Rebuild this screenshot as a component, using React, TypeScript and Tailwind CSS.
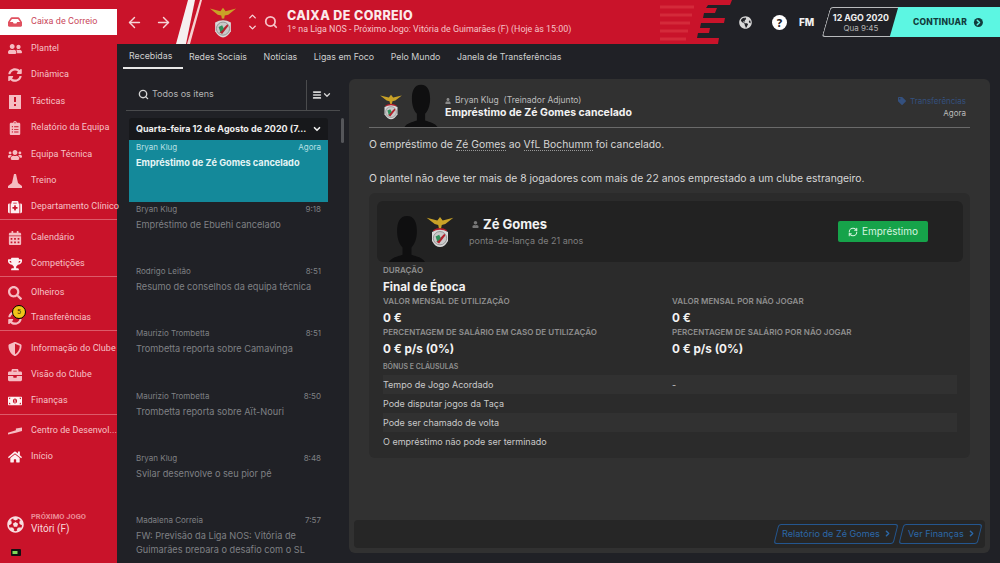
import { ChevronDown, ChevronUp, ChevronRight, ArrowLeft, ArrowRight, Search, RefreshCw, Menu } from 'lucide-react';
import {
  FaBriefcase,
  FaCalendarAlt,
  FaClipboardList,
  FaFutbol,
  FaGlobeAmericas,
  FaHome,
  FaInbox,
  FaMedkit,
  FaMoneyBillAlt,
  FaSearch,
  FaShieldAlt,
  FaSyncAlt,
  FaTrophy,
  FaUserFriends,
  FaUsers,
  FaTag,
  FaUser,
} from 'react-icons/fa';

// Icons the packages don't have in this shape
const TacticsIcon = ({ className }: { className: string }) => (
  <svg viewBox="0 0 14 14" className={className}>
    <path fillRule="evenodd" fill="currentColor" d="M1 0 H13 V14 H1 Z M6 2 V7 H8 V2 Z M6 9 V11 H8 V9 Z" />
  </svg>
);

const TrainingIcon = ({ className }: { className: string }) => (
  <svg viewBox="0 0 14 14" className={className}>
    <path fill="currentColor" d="M6 0 H8 L10 9 L14 12 V14 H0 V12 L4 9 Z" />
  </svg>
);

const DevelopmentIcon = ({ className }: { className: string }) => (
  <svg viewBox="0 0 16 14" className={className}>
    <path fill="currentColor" d="M0 9 L9 6 L9 4 L16 3 V7 L9 9 L0 11 Z" />
  </svg>
);

const navItems = [
  { name: 'Caixa de Correio', icon: FaInbox, h: 'h-[26px]', active: true },
  { name: 'Plantel', icon: FaUserFriends, h: 'h-[27px]' },
  { name: 'Dinâmica', icon: FaSyncAlt, h: 'h-[26px]' },
  { name: 'Tácticas', icon: TacticsIcon, h: 'h-[27px]' },
  { name: 'Relatório da Equipa', icon: FaClipboardList, h: 'h-[26px]' },
  { name: 'Equipa Técnica', icon: FaUsers, h: 'h-[27px]' },
  { name: 'Treino', icon: TrainingIcon, h: 'h-[26px]' },
  { name: 'Departamento Clínico', icon: FaMedkit, h: 'h-[26px]', line: 'mb-[4px]', bright: true },
  { name: 'Calendário', icon: FaCalendarAlt, h: 'h-[27px]' },
  { name: 'Competições', icon: FaTrophy, h: 'h-[26px]', line: 'mb-[3px]', bright: true },
  { name: 'Olheiros', icon: FaSearch, h: 'h-[25px]' },
  { name: 'Transferências', icon: FaSyncAlt, h: 'h-[26px]', line: 'mb-[4px]', badge: '5' },
  { name: 'Informação do Clube', icon: FaShieldAlt, h: 'h-[27px]' },
  { name: 'Visão do Clube', icon: FaBriefcase, h: 'h-[26px]' },
  { name: 'Finanças', icon: FaMoneyBillAlt, h: 'h-[27px]', line: 'mb-[3px]', bright: true },
  { name: 'Centro de Desenvol...', icon: DevelopmentIcon, h: 'h-[26px]' },
  { name: 'Início', icon: FaHome, h: 'h-[26px]', bright: true },
];

const tabs = ['Recebidas', 'Redes Sociais', 'Notícias', 'Ligas em Foco', 'Pelo Mundo', 'Janela de Transferências'];

const messages = [
  { from: 'Bryan Klug', time: '9:18', title: 'Empréstimo de Ebuehi cancelado' },
  { from: 'Rodrigo Leitão', time: '8:51', title: 'Resumo de conselhos da equipa técnica' },
  { from: 'Maurizio Trombetta', time: '8:51', title: 'Trombetta reporta sobre Camavinga' },
  { from: 'Maurizio Trombetta', time: '8:50', title: 'Trombetta reporta sobre Aït-Nouri' },
  { from: 'Bryan Klug', time: '8:48', title: 'Svilar desenvolve o seu pior pé' },
  { from: 'Madalena Correia', time: '7:57', title: 'FW: Previsão da Liga NOS: Vitória de Guimarães prepara o desafio com o SL Benfica' },
];

const Crest = ({ className }: { className: string }) => (
  <svg viewBox="0 0 32 36" className={className}>
    <path d="M1 2 L13 5 L16 1 L19 5 L31 2 L22 9 L18 10 L17 15 L15 15 L14 10 L10 9 Z" fill="#c9a227" />
    <path d="M8 16 Q16 11 24 16 L22 18 H10 Z" fill="#b3202c" />
    <path d="M7 18 Q16 13 25 18 L25 28 Q21 35 16 35 Q11 35 7 28 Z" fill="#d9d9d9" />
    <circle cx="16" cy="25" r="7.5" fill="#c9c9c9" stroke="#8c8c8c" />
    <path d="M12 29 L21 20 L22 22 L15 31 Z" fill="#b3202c" />
    <path d="M11 23 L15 21 L17 25 L13 29 Z" fill="#2f8f5b" />
  </svg>
);

const Silhouette = ({ className }: { className: string }) => (
  <svg viewBox="0 0 40 52" className={className}>
    <path d="M20 1 C12 1 9 8 9 18 C9 27 12 33 15 36 L15 44 C9 46 3 47 0 52 H40 C37 47 31 46 25 44 L25 36 C28 33 31 27 31 18 C31 8 28 1 20 1 Z" fill="#0f0f10" />
  </svg>
);

const Field = ({ label, value }: { label: string; value: string }) => (
  <div className="h-[31px]">
    <div className="whitespace-nowrap text-[8px] font-semibold leading-[11px] tracking-[0.05px] text-[#8f8f8f]">{label}</div>
    <div className="mt-[2px] text-[11.7px] font-bold leading-[18px] text-[#f2f2f2]">{value}</div>
  </div>
);

const Sidebar = () => (
  <aside className="flex h-full w-[117px] shrink-0 flex-col bg-[#c9132a] pt-[9px] font-['Roboto',sans-serif]">
    {navItems.map((item) => {
      const Icon = item.icon;
      return (
        <div
          key={item.name}
          className={`relative flex shrink-0 items-center pl-[8px] ${item.h} ${item.active ? 'bg-white' : ''} ${
            item.line ? `border-b border-[#dc5a69] ${item.line}` : ''
          }`}
        >
          <span className="flex w-[23px] shrink-0 items-center">
            <Icon
              className={`h-[14px] w-[14px] ${
                item.active ? 'text-[#e0505f]' : item.bright ? 'text-[#fdf0f1]' : 'text-[#f6bcc2]'
              }`}
            />
          </span>
          <span className={`whitespace-nowrap text-[9px] tracking-[0.05px] ${item.active ? 'text-[#c9475a]' : 'text-[#f6c3c8]'}`}>
            {item.name}
          </span>
          {item.badge && (
            <span className="absolute left-[12px] top-0 flex h-[14px] w-[14px] items-center justify-center rounded-full border border-black bg-[#f0c419] text-[7px] text-[#3a2c00]">
              {item.badge}
            </span>
          )}
        </div>
      );
    })}
    <div className="mt-auto flex items-center pl-[7px]">
      <FaFutbol className="mr-[7px] mt-[2px] h-[17px] w-[17px] text-[#f8dfe1]" />
      <div>
        <div className="whitespace-nowrap text-[7.5px] font-bold leading-[10px] text-[#ec8c97]">PRÓXIMO JOGO</div>
        <div className="text-[10px] leading-[13px] text-[#f8d8db]">Vitóri (F)</div>
      </div>
    </div>
    <div className="mb-[7px] mt-[14px] pl-[11px]">
      <svg viewBox="0 0 10 7" className="h-[7px] w-[10px]">
        <rect width="10" height="7" rx="1" fill="#111" />
        <rect x="1.5" y="2" width="5" height="3" fill="#7ed957" />
      </svg>
    </div>
  </aside>
);

const TopBar = () => (
  <header className="flex h-[44px] shrink-0">
    <div className="flex flex-1 items-center bg-[#c9132a] pl-[9px]">
      <ArrowLeft className="h-[17px] w-[17px] text-[#f6d5d8]" />
      <ArrowRight className="ml-[12px] h-[17px] w-[17px] text-[#f6d5d8]" />
      <svg viewBox="0 0 32 44" className="h-[44px] w-[32px]">
        <path d="M4 44 L16 0 H23 L14 44 Z" fill="#f5f0f0" />
        <path d="M15 44 L28 0 H30 L18 44 Z" fill="#f5d0d0" />
      </svg>
      <Crest className="ml-[5px] h-[33px] w-[28px]" />
      <div className="ml-[10px] flex flex-col text-[#f6d5d8]">
        <ChevronUp className="h-[11px] w-[11px]" strokeWidth={3} />
        <ChevronDown className="h-[11px] w-[11px]" strokeWidth={3} />
      </div>
      <Search className="ml-[6px] h-[14px] w-[14px] text-[#f6c3c8]" strokeWidth={3} />
      <div className="ml-[9px] font-['Inter',sans-serif]">
        <div className="whitespace-nowrap text-[12.5px] font-extrabold leading-[14px] tracking-[0.4px] text-[#fbe9ea]">CAIXA DE CORREIO</div>
        <div className="whitespace-nowrap font-['Roboto',sans-serif] text-[8.9px] leading-[12px] text-[#f6c3c8]">
          1º na Liga NOS - Próximo Jogo: Vitória de Guimarães (F) (Hoje às 15:00)
        </div>
      </div>
    </div>
    <svg viewBox="0 0 72 44" className="h-[44px] w-[72px] shrink-0">
      <path d="M0 0 H72 L70 5 H48 L46 8 H57 L55 13 H44 L43 18 H65 L64 23 H41 L40 28 H50 L49 33 H38 L37 38 H59 L58 44 H0 Z" fill="#c9132a" />
      <path d="M0 7 H34 M0 15 H32 M0 23 H30 M0 31 H28 M0 39 H26" stroke="#d42a3a" strokeWidth="3" />
    </svg>
    <div className="flex w-[268px] shrink-0 items-center bg-[#202126] pl-[7px]">
      <FaGlobeAmericas className="h-[13px] w-[13px] text-[#d8d8d8]" />
      <span className="ml-[20px] flex h-[15px] w-[15px] items-center justify-center rounded-full bg-white text-[11px] font-extrabold leading-none text-[#202126]">?</span>
      <span className="ml-[12px] font-['Inter',sans-serif] text-[10px] font-extrabold text-[#f0f0f0]">FM</span>
      <div className="ml-[12px] flex h-[31px] items-center">
        <div className="flex h-[30px] w-[72px] -skew-x-[16deg] items-center justify-center rounded-l-[3px] border border-r-0 border-[#b9bbbd] bg-[#202126] pr-[3px]">
          <div className="skew-x-[16deg] text-center font-['Inter',sans-serif]">
            <div className="whitespace-nowrap text-[8.8px] font-bold leading-[11px] text-[#f0f0f0]">12 AGO 2020</div>
            <div className="text-[8px] leading-[10px] text-[#b5b5b5]">Qua 9:45</div>
          </div>
        </div>
        <div className="ml-[-4px] mr-[-8px] flex h-[30px] w-[112px] -skew-x-[16deg] items-center justify-center bg-[#5cf6e2]">
          <div className="flex skew-x-[16deg] items-center pr-[4px] font-['Inter',sans-serif] text-[8.5px] font-extrabold tracking-[0.2px] text-[#123c3c]">
            CONTINUAR
            <ChevronRight className="ml-[7px] h-[9px] w-[9px] rounded-full bg-[#123c3c] text-[#5cf6e2]" strokeWidth={4} />
          </div>
        </div>
      </div>
    </div>
  </header>
);

const MessageList = () => (
  <section className="flex h-full w-[232px] shrink-0 flex-col pl-[9px] pt-[9px] font-['Inter',sans-serif]">
    <div className="flex h-[32px] w-[214px] shrink-0 items-center border-b border-[#4a4b4d]">
      <Search className="ml-[12px] h-[11px] w-[11px] text-[#d5d5d5]" strokeWidth={3} />
      <span className="ml-[3px] mb-[2px] text-[9px] text-[#b5b5b5]">Todos os itens</span>
      <div className="ml-auto flex h-[30px] w-[34px] items-center border-l border-[#4a4b4d] pl-[5px]">
        <Menu className="h-[10px] w-[10px] text-[#d5d5d5]" strokeWidth={4} />
        <ChevronDown className="h-[10px] w-[10px] text-[#d5d5d5]" strokeWidth={3} />
      </div>
    </div>
    <div className="relative mt-[7px] min-h-0 flex-1 overflow-hidden pb-[10px]">
      <div className="absolute right-[5px] top-0 h-[25px] w-[3px] rounded-sm bg-[#55565a]" />
      <div className="ml-[3px] h-full w-[199px] overflow-hidden">
        <div className="flex h-[22px] items-center justify-between rounded-t-[3px] bg-[#17181b] pl-[7px] pr-[6px]">
          <span className="whitespace-nowrap text-[9px] font-bold text-[#efefef]">Quarta-feira 12 de Agosto de 2020 (7...</span>
          <ChevronDown className="h-[10px] w-[10px] text-[#efefef]" strokeWidth={4} />
        </div>
        <div className="h-[62px] bg-[#14899a] px-[7px] pt-[2px]">
          <div className="flex justify-between text-[8px] leading-[11px] text-[#b9e0e5]">
            <span>Bryan Klug</span>
            <span>Agora</span>
          </div>
          <div className="mt-[3px] whitespace-nowrap text-[9.2px] font-bold leading-[13px] text-[#e6f5f6]">Empréstimo de Zé Gomes cancelado</div>
        </div>
        {messages.map((m) => (
          <div key={m.title} className="h-[62.2px] px-[7px] pt-[2px]">
            <div className="flex justify-between text-[8px] leading-[11px] text-[#7f8084]">
              <span>{m.from}</span>
              <span>{m.time}</span>
            </div>
            <div className="mt-[3px] text-[9.2px] leading-[14px] text-[#7f8084]">{m.title}</div>
          </div>
        ))}
      </div>
    </div>
  </section>
);

const MessageDetail = () => (
  <section className="mb-[10px] mr-[10px] mt-[9px] flex min-w-0 flex-1 flex-col rounded-[6px] bg-[#313131] px-[5px] pb-[5px] font-['Inter',sans-serif]">
    <div className="mx-[15px] flex h-[49px] shrink-0 items-end border-b border-[#6a6a6a]">
      <Crest className="mb-[7px] ml-[10px] h-[26px] w-[24px]" />
      <Silhouette className="ml-[1px] h-[43px] w-[34px]" />
      <div className="mb-[8px] ml-[7px]">
        <div className="flex items-center text-[8.5px] leading-[11px] text-[#bcbcbc]">
          <FaUser className="mr-[4px] h-[6px] w-[6px] text-[#8a8a8a]" />
          Bryan Klug&nbsp; (Treinador Adjunto)
        </div>
        <div className="text-[10.5px] font-bold leading-[13px] text-[#f2f2f2]">Empréstimo de Zé Gomes cancelado</div>
      </div>
      <div className="mb-[8px] ml-auto mr-[4px] text-right text-[8px] leading-[12px]">
        <div className="flex items-center text-[#34507e]">
          <FaTag className="mr-[3px] h-[8px] w-[10px]" />
          Transferências
        </div>
        <div className="text-[#bcbcbc]">Agora</div>
      </div>
    </div>
    <div className="flex min-h-0 flex-1 flex-col px-[15px]">
      <p className="mt-[9px] text-[10.35px] leading-[14px] text-[#d6d6d6]">
        O empréstimo de <span className="border-b border-dotted border-[#999]">Zé Gomes</span> ao{' '}
        <span className="border-b border-dotted border-[#999]">VfL Bochumm</span> foi cancelado.
      </p>
      <p className="mt-[20px] whitespace-nowrap text-[10.35px] leading-[14px] text-[#d6d6d6]">
        O plantel não deve ter mais de 8 jogadores com mais de 22 anos emprestado a um clube estrangeiro.
      </p>
      <div className="mt-[8px] h-[265px] rounded-[6px] bg-[#2b2b2b] p-[8px] pr-[7px]">
        <div className="flex h-[61px] items-center rounded-[6px] bg-[#222222] pl-[12px]">
          <Silhouette className="mt-[14px] h-[47px] w-[36px]" />
          <Crest className="h-[32px] w-[30px]" />
          <div className="ml-[14px]">
            <div className="flex items-center pl-[3px] text-[13px] font-bold leading-[17px] text-[#f2f2f2]">
              <FaUser className="mr-[4px] h-[7px] w-[7px] text-[#777]" />
              Zé Gomes
            </div>
            <div className="mt-[1px] text-[9px] leading-[14px] text-[#7f7f7f]">ponta-de-lança de 21 anos</div>
          </div>
          <div className="ml-auto mr-[35px] flex h-[21px] w-[90px] items-center justify-center rounded-[2px] bg-[#16a34a] text-[10px] text-[#d6f5e0]">
            <RefreshCw className="mr-[4px] h-[10px] w-[10px]" strokeWidth={2.5} />
            Empréstimo
          </div>
        </div>
        <div className="px-[6px] pt-[3px]">
          <Field label="DURAÇÃO" value="Final de Época" />
          <div className="grid grid-cols-[289px_1fr]">
            <Field label="VALOR MENSAL DE UTILIZAÇÃO" value="0 €" />
            <Field label="VALOR MENSAL POR NÃO JOGAR" value="0 €" />
            <Field label="PERCENTAGEM DE SALÁRIO EM CASO DE UTILIZAÇÃO" value="0 € p/s (0%)" />
            <Field label="PERCENTAGEM DE SALÁRIO POR NÃO JOGAR" value="0 € p/s (0%)" />
          </div>
          <div className="mt-[3px] text-[7px] font-semibold leading-[11px] text-[#8f8f8f]">BÓNUS E CLÁUSULAS</div>
          <div className="mt-[3px] text-[9px] text-[#c9c9c9]">
            <div className="flex h-[19px] items-center bg-[#313131]">
              <span className="w-[289px]">Tempo de Jogo Acordado</span>
              <span>-</span>
            </div>
            <div className="flex h-[19px] items-center">Pode disputar jogos da Taça</div>
            <div className="flex h-[19px] items-center bg-[#313131]">Pode ser chamado de volta</div>
            <div className="flex h-[19px] items-center">O empréstimo não pode ser terminado</div>
          </div>
        </div>
      </div>
    </div>
    <div className="flex h-[28px] shrink-0 items-center justify-end gap-[5px] rounded-[4px] bg-[#262626] pr-[5px]">
      <div className="flex h-[20px] w-[120px] -skew-x-[14deg] items-center justify-center rounded-[3px] border border-[#24568f] pl-[2px]">
        <span className="flex skew-x-[14deg] items-center whitespace-nowrap text-[9.1px] text-[#2c68a8]">
          Relatório de Zé Gomes
          <ChevronRight className="ml-[3px] h-[9px] w-[9px]" strokeWidth={4} />
        </span>
      </div>
      <div className="flex h-[20px] w-[79px] -skew-x-[14deg] items-center justify-center rounded-[3px] border border-[#24568f] pl-[2px]">
        <span className="flex skew-x-[14deg] items-center whitespace-nowrap text-[9.1px] text-[#2c68a8]">
          Ver Finanças
          <ChevronRight className="ml-[3px] h-[9px] w-[9px]" strokeWidth={4} />
        </span>
      </div>
    </div>
  </section>
);

export default function App() {
  return (
    <div className="flex h-[563px] w-[1000px] overflow-hidden bg-[#202126]">
      <Sidebar />
      <main className="flex min-w-0 flex-1 flex-col">
        <TopBar />
        <nav className="flex h-[26px] shrink-0 px-[6px] font-['Inter',sans-serif] text-[8.8px] text-[#cfcfcf]">
          {tabs.map((tab, i) => (
            <div
              key={tab}
              className={`flex h-[25px] items-center px-[6px] pr-[10.6px] ${i === 0 ? 'border-b-2 border-[#e8e8e8]' : ''}`}
            >
              {tab}
            </div>
          ))}
        </nav>
        <div className="flex min-h-0 flex-1">
          <MessageList />
          <MessageDetail />
        </div>
      </main>
    </div>
  );
}
